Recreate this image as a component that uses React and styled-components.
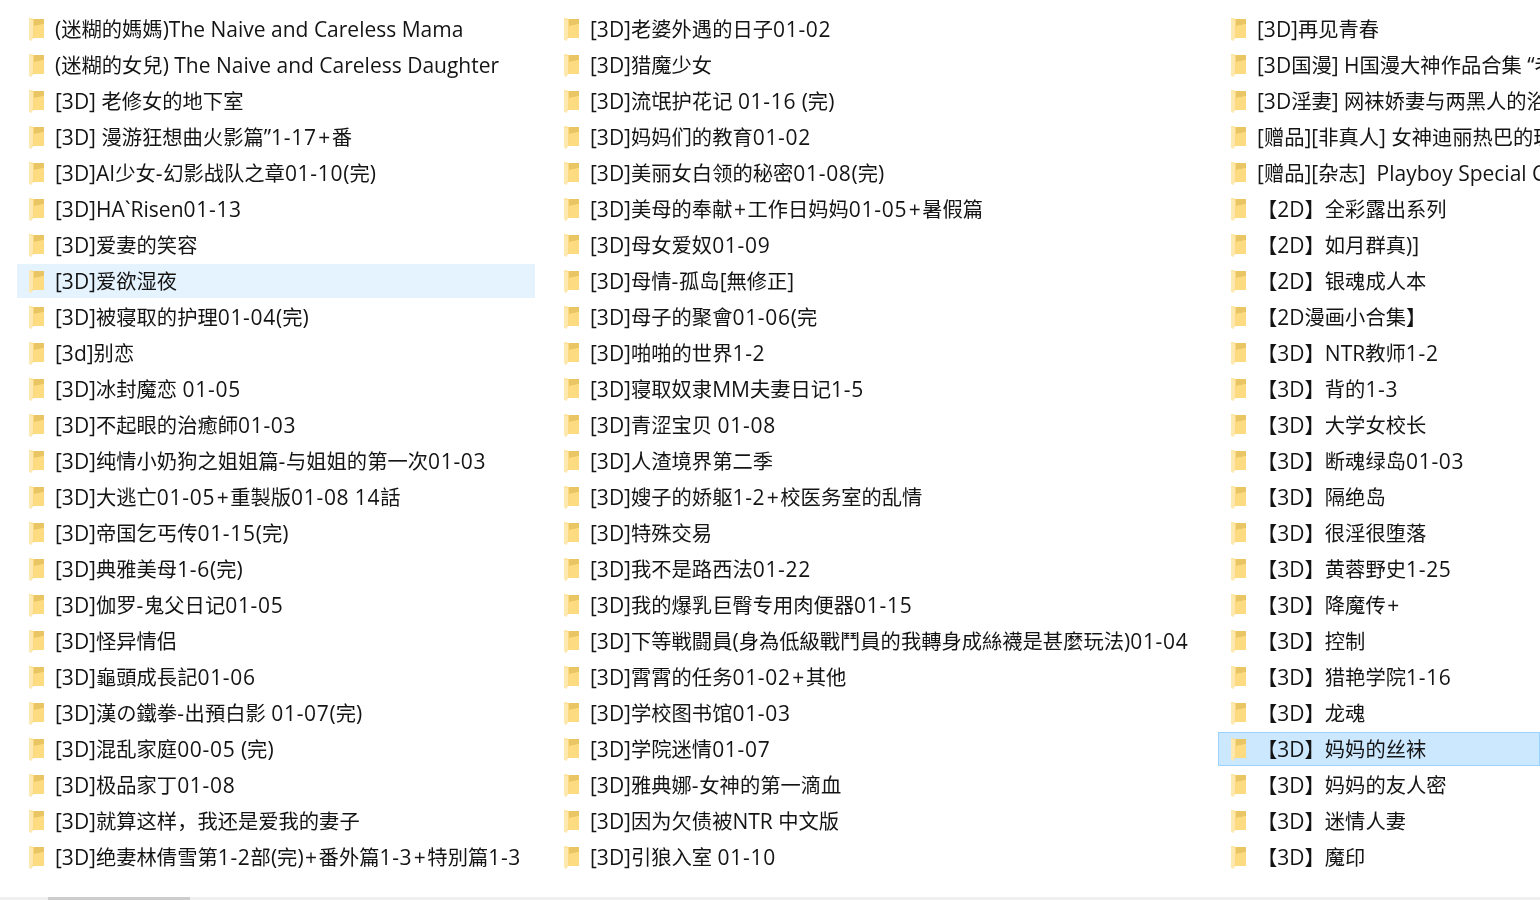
import React from 'react';
import styled, { createGlobalStyle } from 'styled-components';

const GlobalStyle = createGlobalStyle`
    html, body {
        margin: 0;
        padding: 0;
        background: #ffffff;
        overflow: hidden;
    }
`;

const Window = styled.div`
    display: flex;
    flex-direction: column;
    width: 1540px;
    height: 900px;
    overflow: hidden;
    font-family: "Open Sans", "Noto Sans CJK SC", sans-serif;
    font-size: 20.3px;
    color: #141414;
`;

const Columns = styled.div`
    display: grid;
    grid-template-columns: 518px 649px 322px;
    column-gap: 17px;
    flex: 1;
    min-height: 0;
    padding: 12px 0 0 17px;
    filter: blur(0.3px);
`;

const Column = styled.ul`
    display: flex;
    flex-direction: column;
    gap: 2px;
    margin: 0;
    padding: 0;
    list-style: none;
    min-width: 0;
`;

const Row = styled.li`
    display: flex;
    align-items: center;
    gap: 10px;
    height: 34px;
    box-sizing: border-box;
    padding-left: ${p => p.$inset}px;
    white-space: pre;
    overflow: hidden;
    background: ${p => (p.$state === 'selected' ? '#cce8ff' : p.$state === 'hover' ? '#e5f3ff' : 'transparent')};
    box-shadow: ${p => (p.$state === 'selected' ? 'inset 0 0 0 1px #99d1ff' : 'none')};
`;

const Icon = styled.svg`
    flex: none;
    width: 17px;
    height: 25px;
`;

const Name = styled.span`
    line-height: 34px;
`;

const Latin = styled.span`
    font-size: 21px;
`;

const Digits = styled.span`
    letter-spacing: 0.7px;
`;

const Plus = styled.span`
    padding: 0 1.5px;
`;

const ScrollTrack = styled.div`
    flex: none;
    height: 3px;
    background: #f0f0f0;
`;

const ScrollThumb = styled.div`
    width: 142px;
    height: 100%;
    margin-left: 48px;
    background: #cdcdcd;
`;

const Folder = () => (
    <Icon viewBox="0 0 17 25">
        <path d="M1 1 L6 2 H16 V21 H6 L1 23 Z" fill="#fcd97e" />
        <path d="M6 2 H16 V7 L6 9 Z" fill="#e9c564" />
        <path d="M6 9 L16 7 V21 H6 Z" fill="#fddb80" />
        <path d="M1 1 L5 3 V20 L4 21 V24 L1 23 Z" fill="#fde9b0" />
    </Icon>
);

// latin runs are a size up from the CJK ones, numbers and plus signs run a bit wider
const splitDigits = run =>
    run.split(/((?<!\[)(?!\dD)[\d-]+|\+)/).map((part, i) => {
        if (i % 2 === 0) return part;
        return part === '+' ? <Plus key={i}>+</Plus> : <Digits key={i}>{part}</Digits>;
    });

const splitRuns = name =>
    name.split(/([\u0020-\u007f“”]+)/).map((run, i) =>
        i % 2 ? <Latin key={i}>{splitDigits(run)}</Latin> : run
    );

const leftNames = [
    '(迷糊的媽媽)The Naive and Careless Mama',
    '(迷糊的女兒) The Naive and Careless Daughter',
    '[3D] 老修女的地下室',
    '[3D] 漫游狂想曲火影篇”1-17+番',
    '[3D]AI少女-幻影战队之章01-10(完)',
    '[3D]HA`Risen01-13',
    '[3D]爱妻的笑容',
    '[3D]爱欲湿夜',
    '[3D]被寝取的护理01-04(完)',
    '[3d]别恋',
    '[3D]冰封魔恋 01-05',
    '[3D]不起眼的治癒師01-03',
    '[3D]纯情小奶狗之姐姐篇-与姐姐的第一次01-03',
    '[3D]大逃亡01-05+重製版01-08 14話',
    '[3D]帝国乞丐传01-15(完)',
    '[3D]典雅美母1-6(完)',
    '[3D]伽罗-鬼父日记01-05',
    '[3D]怪异情侣',
    '[3D]龜頭成長記01-06',
    '[3D]漢の鐵拳-出預白影 01-07(完)',
    '[3D]混乱家庭00-05 (完)',
    '[3D]极品家丁01-08',
    '[3D]就算这样，我还是爱我的妻子',
    '[3D]绝妻林倩雪第1-2部(完)+番外篇1-3+特別篇1-3',
];

const middleNames = [
    '[3D]老婆外遇的日子01-02',
    '[3D]猎魔少女',
    '[3D]流氓护花记 01-16 (完)',
    '[3D]妈妈们的教育01-02',
    '[3D]美丽女白领的秘密01-08(完)',
    '[3D]美母的奉献+工作日妈妈01-05+暑假篇',
    '[3D]母女爱奴01-09',
    '[3D]母情-孤岛[無修正]',
    '[3D]母子的聚會01-06(完',
    '[3D]啪啪的世界1-2',
    '[3D]寝取奴隶MM夫妻日记1-5',
    '[3D]青涩宝贝 01-08',
    '[3D]人渣境界第二季',
    '[3D]嫂子的娇躯1-2+校医务室的乱情',
    '[3D]特殊交易',
    '[3D]我不是路西法01-22',
    '[3D]我的爆乳巨臀专用肉便器01-15',
    '[3D]下等戦闘員(身為低級戰鬥員的我轉身成絲襪是甚麼玩法)01-04',
    '[3D]霄霄的任务01-02+其他',
    '[3D]学校图书馆01-03',
    '[3D]学院迷情01-07',
    '[3D]雅典娜-女神的第一滴血',
    '[3D]因为欠债被NTR 中文版',
    '[3D]引狼入室 01-10',
];

const rightNames = [
    '[3D]再见青春',
    '[3D国漫] H国漫大神作品合集 “老',
    '[3D淫妻] 网袜娇妻与两黑人的浴',
    '[赠品][非真人] 女神迪丽热巴的理',
    '[赠品][杂志]  Playboy Special Collection',
    '【2D】全彩露出系列',
    '【2D】如月群真)]',
    '【2D】银魂成人本',
    '【2D漫画小合集】',
    '【3D】NTR教师1-2',
    '【3D】背的1-3',
    '【3D】大学女校长',
    '【3D】断魂绿岛01-03',
    '【3D】隔绝岛',
    '【3D】很淫很堕落',
    '【3D】黄蓉野史1-25',
    '【3D】降魔传+',
    '【3D】控制',
    '【3D】猎艳学院1-16',
    '【3D】龙魂',
    '【3D】妈妈的丝袜',
    '【3D】妈妈的友人密',
    '【3D】迷情人妻',
    '【3D】魔印',
];

const columns = [
    { names: leftNames, inset: 11, hover: '[3D]爱欲湿夜' },
    { names: middleNames, inset: 11 },
    { names: rightNames, inset: 12, selected: '【3D】妈妈的丝袜' },
];

export default function App() {
    return (
        <Window>
            <GlobalStyle />
            <Columns>
                {columns.map((col, i) => (
                    <Column key={i}>
                        {col.names.map(name => (
                            <Row
                                key={name}
                                $inset={col.inset}
                                $state={name === col.selected ? 'selected' : name === col.hover ? 'hover' : undefined}
                            >
                                <Folder />
                                <Name>{splitRuns(name)}</Name>
                            </Row>
                        ))}
                    </Column>
                ))}
            </Columns>
            <ScrollTrack>
                <ScrollThumb />
            </ScrollTrack>
        </Window>
    );
}
